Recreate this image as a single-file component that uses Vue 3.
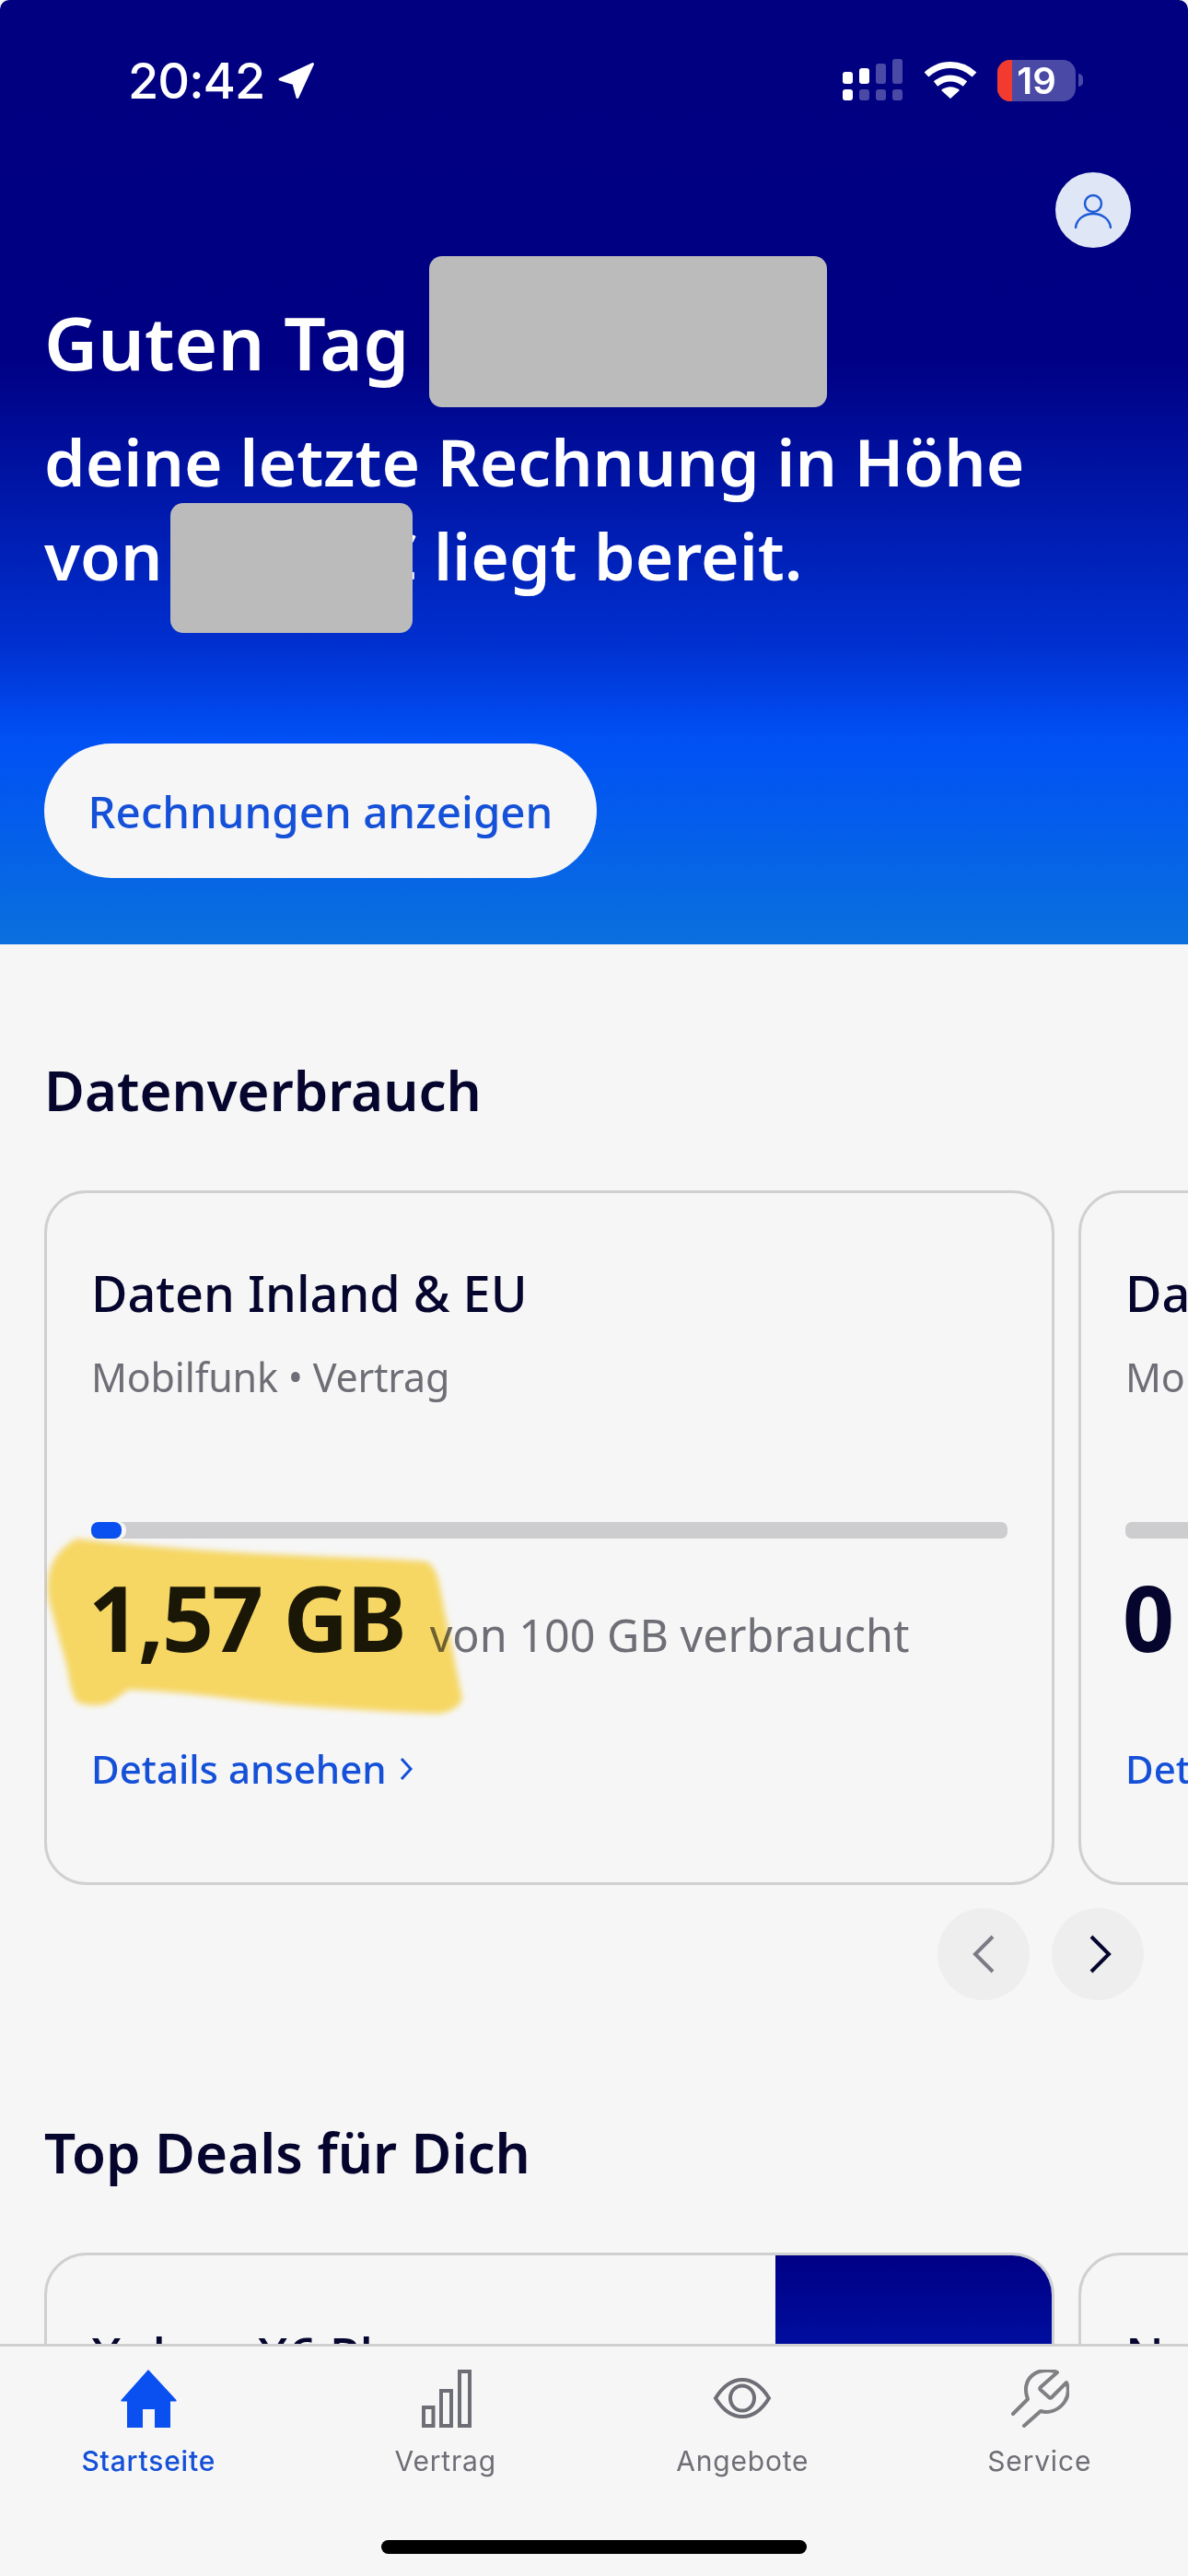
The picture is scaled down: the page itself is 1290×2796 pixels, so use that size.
<script setup>
const tabs = [
  { key: 'home', label: 'Startseite', active: true },
  { key: 'bars', label: 'Vertrag' },
  { key: 'eye', label: 'Angebote' },
  { key: 'tool', label: 'Service' },
]
</script>

<template>
  <div class="screen">
    <header class="hero">
      <div class="status">
        <div class="clock">
          <span>20:42</span>
          <svg class="locate" viewBox="0 0 41 41"><path d="M38.5 2.5 3 19l15 4.5 4 15z" fill="#fff" stroke="#fff" stroke-width="3" stroke-linejoin="round" /></svg>
        </div>
        <div class="status-right">
          <svg class="signal" viewBox="0 0 66 46">
            <rect x="0" y="14" width="11" height="13" rx="3" fill="#fff" />
            <rect x="18" y="10" width="11" height="17" rx="3" fill="#fff" />
            <rect x="36" y="5" width="11" height="22" rx="3" fill="#4a4aa6" />
            <rect x="54" y="0" width="11" height="27" rx="3" fill="#4a4aa6" />
            <rect x="0" y="33" width="11" height="12" rx="3" fill="#fff" />
            <rect x="18" y="33" width="11" height="12" rx="3" fill="#4a4aa6" />
            <rect x="36" y="33" width="11" height="12" rx="3" fill="#4a4aa6" />
            <rect x="54" y="33" width="11" height="12" rx="3" fill="#4a4aa6" />
          </svg>
          <svg class="wifi" viewBox="0 0 58 42">
            <path d="M3 15C18 1 40 1 55 15" fill="none" stroke="#fff" stroke-width="7" />
            <path d="M13 25c10-8 22-8 32 0" fill="none" stroke="#fff" stroke-width="7" />
            <path d="M19 32c6-5 14-5 20 0L29 41z" fill="#fff" />
          </svg>
          <div class="battery">
            <div class="battery-body">
              <span class="battery-level"></span>
              <span class="battery-num">19</span>
            </div>
            <span class="battery-cap"></span>
          </div>
        </div>
      </div>

      <div class="avatar-row">
        <div class="avatar">
          <svg viewBox="0 0 40 40" fill="none" stroke="#1c5ad6" stroke-width="2.4" stroke-linecap="round">
            <circle cx="20" cy="13" r="9" />
            <path d="M1 39c1-9 9-15 19-15s18 6 19 15" />
          </svg>
        </div>
      </div>

      <div class="greeting">
        <h1>Guten Tag</h1>
        <div class="redact redact-name"></div>
      </div>
      <p class="bill">deine letzte Rechnung in Höhe<br />von <span class="amount">00,00 €<span class="redact redact-amount"></span></span> liegt bereit.</p>
      <button class="cta">Rechnungen anzeigen</button>
    </header>

    <main class="content">
      <h2 class="section-title">Datenverbrauch</h2>
      <div class="slider">
        <article class="card">
          <h3>Daten Inland &amp; EU</h3>
          <p class="sub">Mobilfunk • Vertrag</p>
          <div class="track">
            <div class="fill"></div>
          </div>
          <div class="usage">
            <strong>1,57 GB</strong>
            <span>von 100 GB verbraucht</span>
            <svg class="marker" viewBox="0 0 470 210">
              <defs>
                <filter id="soft"><feGaussianBlur stdDeviation="3" /></filter>
              </defs>
              <path d="M34 8C100 16 180 22 248 25c60 3 120 4 166 8 8 4 12 14 14 25l10 50 15 74c-4 10-16 16-29 16-56-2-110-6-166-10-56-6-110-14-167-16-10 6-18 14-27 16-12 2-24 0-30-3-6-12-8-24-10-37L4 75C2 60 3 45 8 35 14 22 24 14 34 8z" fill="#ffdf67" filter="url(#soft)" />
            </svg>
          </div>
          <a class="more">Details ansehen
            <svg viewBox="0 0 15 26"><path d="M2 2l10 11L2 24" fill="none" stroke="#1550d8" stroke-width="3" /></svg>
          </a>
        </article>
        <article class="card">
          <h3>Daten Roaming</h3>
          <p class="sub">Mobilfunk • Vertrag</p>
          <div class="track"></div>
          <div class="usage"><strong class="navy">0 GB</strong></div>
          <a class="more">Details ansehen</a>
        </article>
      </div>
      <div class="pager">
        <button class="round">
          <svg viewBox="0 0 26 44"><path d="M23 3 4 22l19 19" fill="none" stroke="#7b7b85" stroke-width="4" /></svg>
        </button>
        <button class="round next">
          <svg viewBox="0 0 26 44"><path d="M3 3l19 19L3 41" fill="none" stroke="#05052e" stroke-width="4" /></svg>
        </button>
      </div>

      <h2 class="section-title deals-title">Top Deals für Dich</h2>
      <div class="slider">
        <article class="deal">
          <h3>Xplora X6 Play</h3>
          <div class="deal-pic"></div>
        </article>
        <article class="deal">
          <h3>Neu</h3>
        </article>
      </div>
    </main>

    <nav class="tabbar">
      <div v-for="t in tabs" :key="t.key" class="tab" :class="{ on: t.active }">
        <svg class="tab-icon" viewBox="0 0 64 64">
          <path v-if="t.key === 'home'" fill="#0a4ff0" d="M32 0 2.500 33v1.500H9V63h17V43h13v20h17V34.500h6.500V33z" />
          <g v-else-if="t.key === 'bars'" fill="none" stroke="#6e6e76" stroke-width="4">
            <rect x="8" y="41" width="10.500" height="20" />
            <rect x="27" y="23" width="11" height="38" />
            <rect x="47" y="2" width="11" height="59" />
          </g>
          <g v-else-if="t.key === 'eye'" fill="none" stroke="#6e6e76" stroke-width="4">
            <path d="M3 31C11 18 21 11 32 11S53 18 61 31C53 44 43 51 32 51S11 44 3 31z" />
            <ellipse cx="32" cy="31" rx="13" ry="13.500" />
          </g>
          <path v-else fill="none" stroke="#808084" stroke-width="4" stroke-linecap="round" stroke-linejoin="round" d="M3 48 19 32c-2-5-3-11-1-17C21 6 30 0 42 1c3 0 7 1 9 2L33 19c-1 1-1 2 0 3l9 8c1 1 2 1 3 0L61 14c3 7 2 15-2 21-6 9-17 13-26 10L15 61" />
        </svg>
        <span>{{ t.label }}</span>
      </div>
      <div class="home-bar"></div>
    </nav>
  </div>
</template>

<style scoped>
.screen {
  position: relative;
  width: 1290px;
  height: 2796px;
  overflow: hidden;
  background: #f6f6f6;
  font-family: "Noto Sans", sans-serif;
  color: #05052e;
}

.hero {
  height: 1025px;
  box-sizing: border-box;
  padding: 64px 48px 0;
  border-radius: 10px 10px 0 0;
  background: linear-gradient(180deg, #000080 0, #000084 390px, #0030d0 700px, #0050f5 800px, #0a70dd 1025px);
  color: #fff;
}

.status {
  display: flex;
  justify-content: space-between;
  align-items: center;
  height: 46px;
  padding: 0 66px 0 91px;
}

.clock {
  display: flex;
  align-items: center;
  gap: 14px;
  font-family: Inter, sans-serif;
  font-size: 54px;
  font-weight: 500;
  letter-spacing: -1px;
}

.locate {
  width: 41px;
  height: 41px;
}

.status-right {
  display: flex;
  align-items: center;
  gap: 22px;
}

.signal {
  width: 66px;
  height: 46px;
}

.wifi {
  width: 58px;
  height: 42px;
}

.battery {
  display: flex;
  align-items: center;
  gap: 3px;
}

.battery-body {
  position: relative;
  width: 85px;
  height: 45px;
  border-radius: 14px;
  background: #4a4aa6;
  text-align: center;
}

.battery-level {
  position: absolute;
  left: 0;
  top: 0;
  bottom: 0;
  width: 16px;
  border-radius: 14px 0 0 14px;
  background: #f23a2f;
}

.battery-num {
  position: relative;
  font-family: Inter, sans-serif;
  font-size: 40px;
  line-height: 45px;
  font-weight: 600;
}

.battery-cap {
  width: 5px;
  height: 14px;
  border-radius: 0 5px 5px 0;
  background: #4a4aa6;
}

.avatar-row {
  display: flex;
  justify-content: flex-end;
  margin: 77px 14px 0 0;
}

.avatar {
  display: flex;
  align-items: center;
  justify-content: center;
  width: 82px;
  height: 82px;
  border-radius: 50%;
  background: #dfe6f5;
}

.avatar svg {
  width: 40px;
  height: 40px;
}

.greeting {
  display: flex;
  align-items: center;
  gap: 22px;
  margin-top: 9px;
}

.greeting h1 {
  margin: 0;
  padding-top: 22px;
  font-size: 80px;
  font-weight: 600;
  line-height: 142px;
}

.redact {
  background: #bbbbbb;
  border-radius: 14px;
}

.redact-name {
  width: 432px;
  height: 164px;
}

.bill {
  margin: 8px 0 0;
  font-size: 71.300px;
  font-weight: 600;
  line-height: 102px;
}

.amount {
  position: relative;
  padding-left: 15px;
}

.redact-amount {
  position: absolute;
  left: -10px;
  top: -8px;
  width: 263px;
  height: 141px;
}

.cta {
  display: block;
  height: 146px;
  width: 600px;
  margin-top: 153px;
  border: 0;
  border-radius: 73px;
  background: #f6f6f6;
  color: #1550d8;
  font-family: "Noto Sans", sans-serif;
  font-size: 47.500px;
  font-weight: 500;
}

.content {
  padding: 120px 0 0 48px;
}

.section-title {
  margin: 0;
  font-size: 60px;
  font-weight: 600;
  line-height: 76px;
}

.slider {
  display: flex;
  gap: 26px;
  margin-top: 71px;
}

.card {
  flex: none;
  box-sizing: border-box;
  width: 1097px;
  height: 754px;
  padding: 77px 48px 0;
  border: 3px solid #d0d0d2;
  border-radius: 46px;
}

.card h3 {
  margin: 0;
  font-size: 54px;
  font-weight: 500;
  line-height: 62px;
}

.sub {
  margin: 34px 0 0;
  font-size: 43px;
  letter-spacing: -0.2px;
  line-height: 54px;
  color: #6e6e76;
}

.track {
  position: relative;
  height: 18px;
  margin-top: 130px;
  border-radius: 7px;
  background: #cdcdd0;
}

.fill {
  width: 33px;
  height: 18px;
  border-radius: 8px;
  background: #0a4ff0;
  box-shadow: 5px 0 0 #f6f6f6;
}

.usage {
  position: relative;
  display: flex;
  align-items: baseline;
  gap: 27px;
  margin-top: 25px;
  font-size: 48.500px;
  color: #6e6e76;
}

.marker {
  position: absolute;
  left: -50px;
  top: -33px;
  width: 470px;
  height: 210px;
  mix-blend-mode: multiply;
}

.usage strong {
  margin-left: -3px;
  font-size: 98px;
  font-weight: 700;
  letter-spacing: -2px;
  line-height: 120px;
  color: #1a1a10;
}

.usage .navy {
  color: #05052e;
}

.more {
  display: flex;
  align-items: center;
  gap: 14px;
  margin-top: 77px;
  font-size: 42px;
  font-weight: 500;
  line-height: 56px;
  color: #1550d8;
}

.more svg {
  width: 15px;
  height: 26px;
}

.pager {
  display: flex;
  justify-content: flex-end;
  gap: 24px;
  margin: 25px 48px 0 0;
}

.round {
  display: flex;
  align-items: center;
  justify-content: center;
  width: 100px;
  height: 100px;
  padding: 0;
  border: 0;
  border-radius: 50%;
  background: #eeeeee;
}

.round svg {
  width: 26px;
  height: 44px;
}

.next svg {
  margin-left: 6px;
}

.deals-title {
  margin-top: 127px;
}

.deal {
  position: relative;
  flex: none;
  box-sizing: border-box;
  width: 1097px;
  height: 300px;
  padding: 77px 48px 0;
  border: 3px solid #d0d0d2;
  border-radius: 46px;
  overflow: hidden;
}

.deal h3 {
  margin: 0;
  font-size: 54px;
  font-weight: 500;
  line-height: 62px;
}

.deal-pic {
  position: absolute;
  top: 0;
  right: 0;
  bottom: 0;
  width: 300px;
  background: linear-gradient(180deg, #000086 0, #000e9e 100px);
}

.tabbar {
  position: absolute;
  left: 0;
  right: 0;
  bottom: 0;
  display: grid;
  grid-template-columns: repeat(4, 1fr);
  align-content: start;
  height: 252px;
  box-sizing: border-box;
  padding-top: 25px;
  border-top: 3px solid #d0d0d2;
  background: #f6f6f6;
}

.tab {
  display: flex;
  flex-direction: column;
  align-items: center;
  font-family: Inter, sans-serif;
  font-size: 30px;
  letter-spacing: 0.800px;
  color: #6e6e76;
}

.tab.on {
  font-weight: 500;
  color: #1550d8;
}

.tab-icon {
  width: 64px;
  height: 64px;
  margin-bottom: 17px;
}

.home-bar {
  position: absolute;
  left: 414px;
  bottom: 24px;
  width: 462px;
  height: 15px;
  border-radius: 8px;
  background: #000;
}
</style>

<style>
body {
  background: #f6f6f6;
}
</style>
